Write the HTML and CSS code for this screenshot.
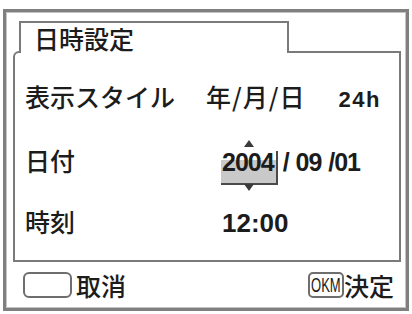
FILE: index.html
```html
<!DOCTYPE html>
<html lang="ja">
<head>
<meta charset="utf-8">
<link rel="stylesheet" href="styles.css">
</head>
<body>
<div class="screen">
  <div class="frame">
    <div class="tab">日時設定</div>
    <div class="panel">
      <div class="row r1">
        <span class="label">表示スタイル</span>
        <span class="ymd">年/月/日</span>
        <span class="num h24">24h</span>
      </div>
      <div class="row r2">
        <span class="label">日付</span>
        <span class="dateval">
          <span class="yearbox num"><span class="tri up"></span>2004<span class="tri down"></span></span><span class="num rest">/ 09 /01</span>
        </span>
      </div>
      <div class="row r3">
        <span class="label">時刻</span>
        <span class="num time">12:00</span>
      </div>
    </div>
    <div class="bottombar">
      <span class="keybox cancel"></span>
      <span class="btntext">取消</span>
      <span class="spacer"></span>
      <span class="keybox ok"><span class="oktext">OKM</span></span>
      <span class="btntext confirm">決定</span>
    </div>
  </div>
</div>
</body>
</html>
```

FILE: styles.css
```css
html, body {
  margin: 0;
  padding: 0;
  background: #ffffff;
}

.screen {
  width: 412px;
  height: 314px;
  box-sizing: border-box;
  padding: 9px 3px 3px 3px;
  background: #ffffff;
  color: #1c1c1c;
  font-family: "Noto Sans CJK JP", "Liberation Sans", sans-serif;
  font-weight: 500;
}

.frame {
  height: 100%;
  box-sizing: border-box;
  border: 3px solid #808080;
  box-shadow: inset 1px 1px 0 #c4c4c4, inset -1px -1px 0 #c4c4c4;
  display: flex;
  flex-direction: column;
  padding: 9px 5px 0 7px;
}

.tab {
  position: relative;
  z-index: 1;
  margin-left: 6px;
  width: 270px;
  height: 32px;
  margin-bottom: -2px;
  box-sizing: border-box;
  border: 2px solid #7a7a7a;
  border-bottom: none;
  background: #ffffff;
  padding-left: 13px;
  font-size: 25px;
  line-height: 30px;
}

.panel {
  height: 211px;
  box-sizing: border-box;
  border: 2px solid #7a7a7a;
  border-top-left-radius: 6px;
  padding: 11px 0 0 10px;
  display: flex;
  flex-direction: column;
}

.row {
  display: flex;
  align-items: baseline;
  height: 64px;
  line-height: 64px;
  font-size: 25px;
}

.row.r3 {
  height: 58px;
  line-height: 58px;
}

.label {
  width: 181px;
  flex: none;
}

.num {
  font-family: "Liberation Sans", Arial, sans-serif;
  font-weight: bold;
}

.ymd {
  font-size: 25px;
  letter-spacing: 1px;
}

.h24 {
  font-size: 22px;
  letter-spacing: 1.5px;
  margin-left: 33px;
}

.dateval {
  padding-left: 15px;
  display: inline-flex;
  align-items: baseline;
}

.yearbox {
  position: relative;
  display: inline-block;
  font-size: 25px;
  letter-spacing: -1px;
  line-height: 23px;
  padding: 0 2px 9px 1px;
  border-right: 2px solid #4a4a4a;
  border-bottom: 2px solid #4a4a4a;
  background: linear-gradient(to bottom, transparent 9px, #c9c9c9 9px);
}

.tri {
  position: absolute;
  left: 23px;
  width: 0;
  height: 0;
  border-left: 5px solid transparent;
  border-right: 5px solid transparent;
}

.tri.up {
  top: -11px;
  border-bottom: 7px solid #3a3a3a;
}

.tri.down {
  top: 33px;
  border-top: 7px solid #3a3a3a;
}

.rest {
  font-size: 25px;
  letter-spacing: -1px;
  word-spacing: 1px;
  margin-left: 5px;
}

.time {
  font-size: 26px;
  letter-spacing: 0;
  padding-left: 16px;
}

.bottombar {
  flex: 1;
  display: flex;
  align-items: center;
  padding: 0 7px 0 10px;
}

.keybox {
  box-sizing: border-box;
  height: 26px;
  border: 2px solid #6e6e6e;
  border-radius: 6px;
  flex: none;
}

.keybox.cancel {
  width: 49px;
}

.keybox.ok {
  width: 36px;
  border-radius: 5px;
  display: flex;
  align-items: center;
  overflow: visible;
  white-space: nowrap;
}

.oktext {
  display: inline-block;
  font-family: "Liberation Sans", Arial, sans-serif;
  font-size: 21px;
  font-weight: normal;
  line-height: 22px;
  transform: scaleX(0.62);
  transform-origin: left center;
  margin-left: 1px;
}

.btntext {
  font-size: 25px;
  line-height: 30px;
  margin-left: 4px;
}

.btntext.confirm {
  margin-left: 0;
}

.spacer {
  flex: 1;
}
```
